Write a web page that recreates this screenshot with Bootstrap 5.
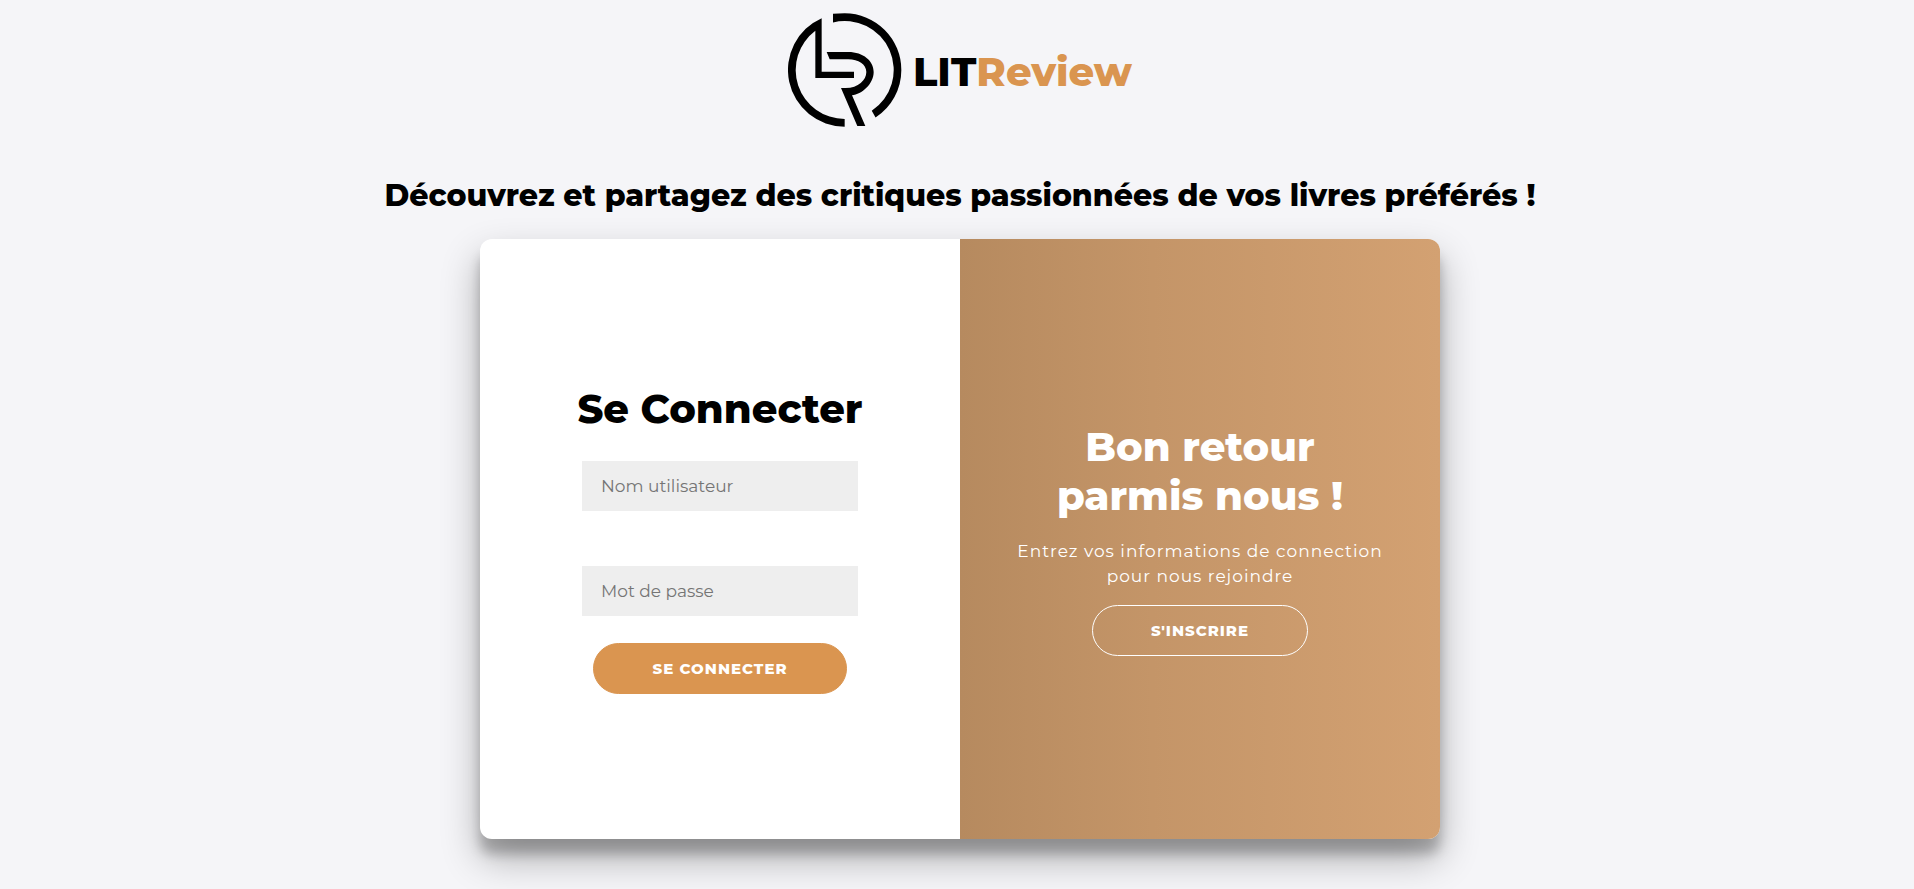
<!DOCTYPE html>
<html lang="fr">
<head>
<meta charset="utf-8">
<meta name="viewport" content="width=device-width, initial-scale=1">
<title>LITReview</title>
<link href="https://cdn.jsdelivr.net/npm/bootstrap@5.3.0/dist/css/bootstrap.min.css" rel="stylesheet">
<style>
  body {
    background: #f5f5f8;
    color: #000;
    font-family: Montserrat, Inter, "Open Sans", sans-serif;
    padding: 13px 0 50px 6px;
  }
  .brand { gap: 11px; }
  .logo-mark { width: 114px; height: 114px; }
  .brand-name, .panel-title { font-size: 40px; line-height: 49px; font-weight: 800; }
  .brand-name { padding-top: 3px; }
  .brand-accent { color: #da9550; }
  .tagline { font-size: 30px; line-height: 40px; font-weight: 800; margin: 49px 0 23px; }
  .auth-card {
    max-width: 960px;
    min-height: 600px;
    border-radius: 12px;
    box-shadow: 0 19px 38px rgba(0, 0, 0, .3), 0 15px 12px rgba(0, 0, 0, .22);
  }
  .welcome { background: linear-gradient(to right, #b68a5f, #c49568 40%, #d3a172); }
  .auth-form { width: 276px; }
  .form-title { margin-bottom: 28px; }
  .welcome-title { margin-bottom: 19px; }
  .field {
    height: 50px;
    padding: 0 19px;
    border: 0;
    border-radius: 0;
    background: #eee;
    font-size: 17px;
  }
  .field:focus { background: #eee; }
  .field::placeholder { color: #757575; }
  .field + .field { margin-top: 55px; }
  .pill {
    --bs-btn-color: #fff;
    --bs-btn-hover-color: #fff;
    --bs-btn-font-size: 15px;
    --bs-btn-font-weight: 800;
    --bs-btn-line-height: 19px;
    --bs-btn-padding-y: 15px;
    --bs-btn-border-radius: 26px;
    letter-spacing: 1px;
    text-transform: uppercase;
  }
  .pill-solid { width: 254px; margin-top: 27px; --bs-btn-bg: #da9550; --bs-btn-border-color: #da9550; --bs-btn-hover-bg: #c98441; }
  .pill-outline { width: 216px; --bs-btn-border-color: #fff; --bs-btn-hover-bg: #da9550; }
  .lead-in { font-size: 17px; line-height: 25px; letter-spacing: 1px; }
</style>
</head>
<body>
<header class="brand d-flex justify-content-center align-items-center">
  <svg class="logo-mark" viewBox="24 24 342 342" aria-hidden="true">
    <path d="M125 39.6A170 170 0 0 0 194 365V342A147 147 0 0 1 106 77.3V219H222V200H125Z"/>
    <path d="M159 28.6V52.2A147 147 0 0 1 275.3 317.5L286.7 337.5A170 170 0 0 0 364 195A170 170 0 0 0 194 25Q176 25 159 26.6Z"/>
    <path d="M140 141H205C250 141 281 168 281 201C281 237 245 268 216 271L256 363H232L183 249H197C235 249 259 225 259 201C259 178 235 163 205 163H149Z"/>
  </svg>
  <span class="brand-name">LIT<span class="brand-accent">Review</span></span>
</header>
<main class="d-flex flex-column align-items-center">
  <h2 class="tagline text-center">Découvrez et partagez des critiques passionnées de vos livres préférés !</h2>
  <div class="auth-card container-fluid bg-white overflow-hidden d-flex p-0">
    <div class="row g-0 flex-fill">
      <section class="col-6 d-flex flex-column align-items-center justify-content-center">
        <h1 class="panel-title form-title">Se Connecter</h1>
        <form class="auth-form d-flex flex-column align-items-center">
          <input class="form-control field" type="text" placeholder="Nom utilisateur" aria-label="Nom utilisateur">
          <input class="form-control field" type="password" placeholder="Mot de passe" aria-label="Mot de passe">
          <button class="btn pill pill-solid" type="submit">Se connecter</button>
        </form>
      </section>
      <section class="welcome col-6 text-white text-center d-flex flex-column align-items-center justify-content-center">
        <h1 class="panel-title welcome-title">Bon retour<br>parmis nous !</h1>
        <p class="lead-in mb-3">Entrez vos informations de connection<br>pour nous rejoindre</p>
        <button class="btn pill pill-outline" type="button">S'inscrire</button>
      </section>
    </div>
  </div>
</main>
<script src="https://cdn.jsdelivr.net/npm/bootstrap@5.3.0/dist/js/bootstrap.bundle.min.js"></script>
</body>
</html>
